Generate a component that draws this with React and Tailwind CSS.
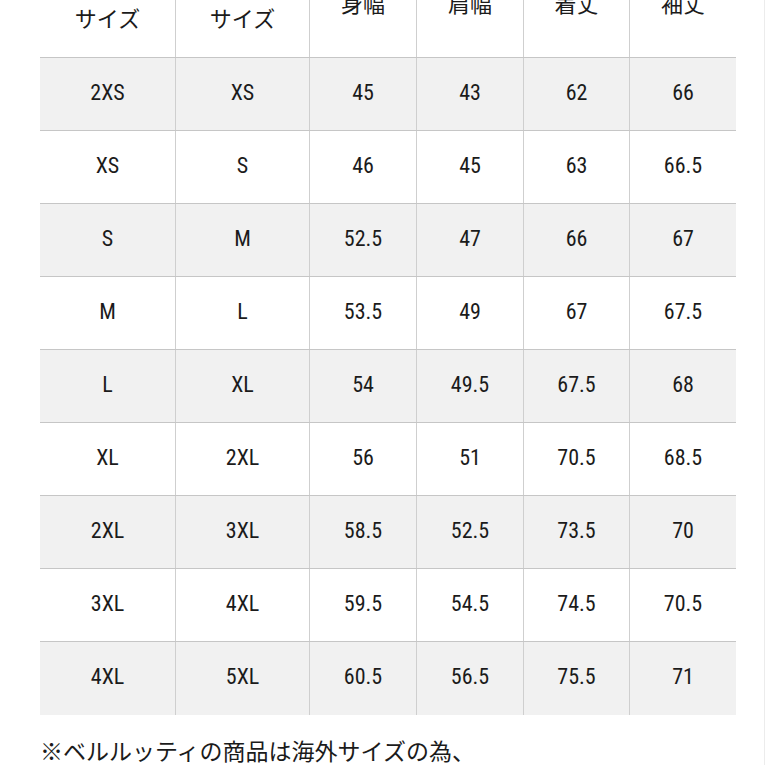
const HEAD = [
  ['ベルルッティ', 'サイズ'],
  ['日本', 'サイズ'],
  ['身幅'],
  ['肩幅'],
  ['着丈'],
  ['袖丈'],
];

const ROWS = [
  ['2XS', 'XS', '45', '43', '62', '66'],
  ['XS', 'S', '46', '45', '63', '66.5'],
  ['S', 'M', '52.5', '47', '66', '67'],
  ['M', 'L', '53.5', '49', '67', '67.5'],
  ['L', 'XL', '54', '49.5', '67.5', '68'],
  ['XL', '2XL', '56', '51', '70.5', '68.5'],
  ['2XL', '3XL', '58.5', '52.5', '73.5', '70'],
  ['3XL', '4XL', '59.5', '54.5', '74.5', '70.5'],
  ['4XL', '5XL', '60.5', '56.5', '75.5', '71'],
];

const cols = 'grid grid-cols-[135px_134px_107px_107px_106px_107px]';

export default function App() {
  return (
    <div className="h-[765px] w-[765px] overflow-hidden bg-white border-r border-[#ececec]">
      <div className="ml-[40px] mt-[-52px] w-[696px] text-[#1b1b1b] font-['Liberation_Sans_Narrow','Roboto_Condensed','Noto_Sans_CJK_JP',sans-serif] text-[22px]">
        {/* Header */}
        <div className={`${cols} h-[110px] border-b border-[#c6c6c6] bg-white`}>
          {HEAD.map((lines, i) => (
            <div
              key={i}
              className={`flex flex-col items-center justify-center pb-[2px] leading-[30px] font-['Noto_Sans_CJK_JP',sans-serif] ${i > 0 ? 'border-l border-[#cfcfcf]' : ''}`}
            >
              {lines.map((l) => (
                <span key={l}>{l}</span>
              ))}
            </div>
          ))}
        </div>

        {/* Body */}
        {ROWS.map((row, r) => (
          <div
            key={r}
            className={`${cols} h-[73px] ${r < ROWS.length - 1 ? 'border-b border-[#c6c6c6]' : ''} ${r % 2 === 0 ? 'bg-[#f1f1f1]' : 'bg-white'}`}
          >
            {row.map((v, i) => (
              <div
                key={i}
                className={`flex items-center justify-center pb-[4px] ${i > 0 ? 'border-l border-[#cfcfcf]' : ''}`}
              >
                {v}
              </div>
            ))}
          </div>
        ))}

        {/* Note */}
        <p className="mt-[20px] leading-[30px] whitespace-nowrap font-['Noto_Sans_CJK_JP',sans-serif] text-[23px] text-[#1b1b1b]">
          ※ベルルッティの商品は海外サイズの為、
        </p>
      </div>
    </div>
  );
}
